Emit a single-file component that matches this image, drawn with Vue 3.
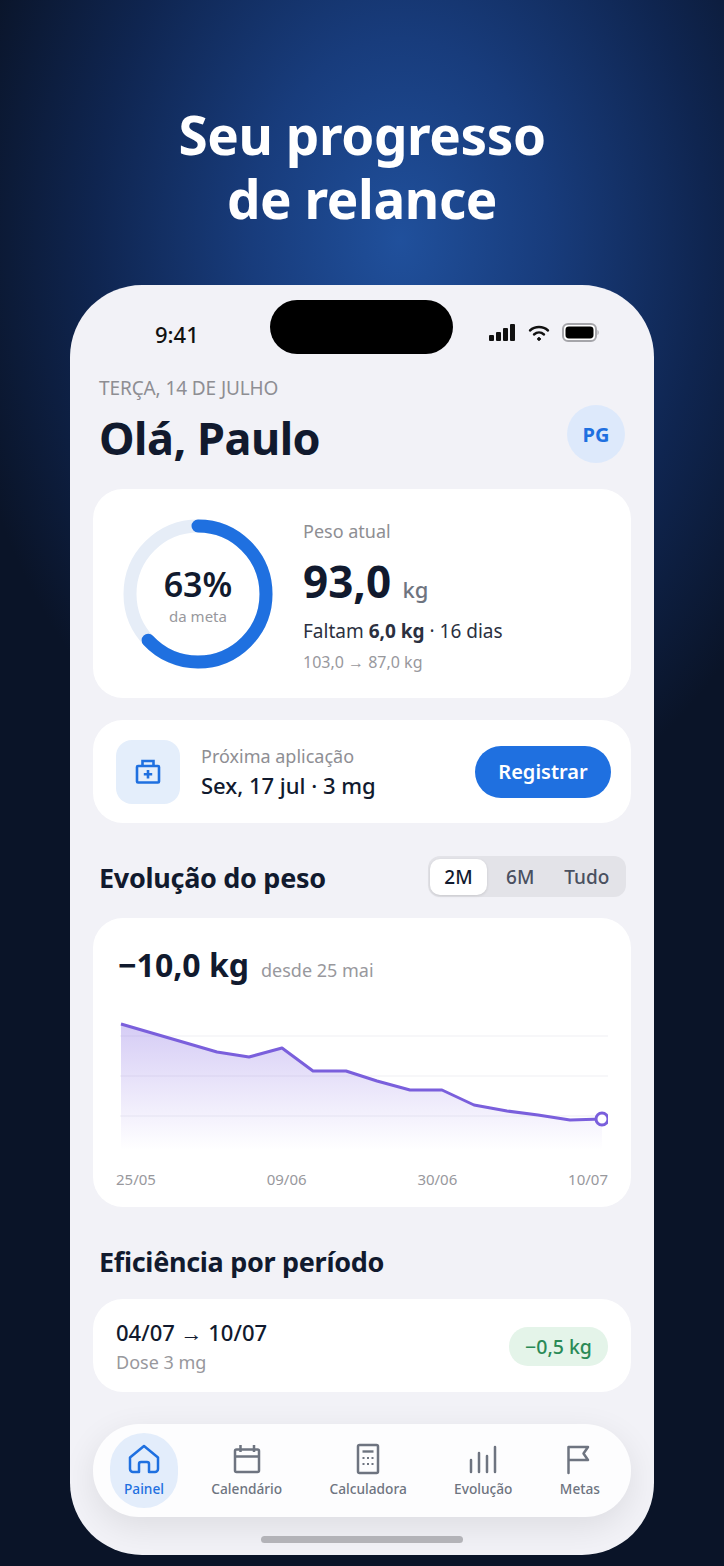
<template>
  <div class="page">
    <h1 class="headline">Seu progresso<br />de relance</h1>

    <div class="phone">
      <div class="status-bar">
        <span class="time">9:41</span>
        <div class="island"></div>
        <div class="status-icons">
          <svg width="27" height="18" viewBox="0 0 27 18" fill="#111">
            <rect x="0" y="11" width="5" height="6" rx="1" />
            <rect x="7" y="8" width="5" height="9" rx="1" />
            <rect x="14" y="4" width="5" height="13" rx="1" />
            <rect x="21" y="0" width="5" height="17" rx="1" />
          </svg>
          <svg width="22" height="18" viewBox="0 0 22 18" fill="none" stroke="#111" stroke-width="2.4" stroke-linecap="round">
            <path d="M2 6.500c5-4.600 13-4.600 18 0" />
            <path d="M6 10.500c3-2.600 7-2.600 10 0" />
            <circle cx="11" cy="15" r="1.400" fill="#111" stroke-width="1" />
          </svg>
          <svg width="38" height="19" viewBox="0 0 38 19">
            <rect x="1" y="1" width="33" height="17" rx="5" fill="#fff" stroke="#a5a5aa" stroke-width="2" />
            <rect x="3.500" y="3.500" width="28" height="12" rx="3.400" fill="#000" />
            <path d="M35.500 7c1.600.4 1.600 4.600 0 5z" fill="#a5a5aa" />
          </svg>
        </div>
      </div>

      <div class="content">
        <div class="greeting">
          <div>
            <div class="date">TERÇA, 14 DE JULHO</div>
            <div class="hello">Olá, Paulo</div>
          </div>
          <div class="avatar">PG</div>
        </div>

        <section class="card weight-card">
          <div class="ring">
            <svg width="150" height="150" viewBox="0 0 150 150">
              <circle cx="75" cy="75" r="68" fill="none" stroke="#e6edf7" stroke-width="13" />
              <circle
                cx="75"
                cy="75"
                r="68"
                fill="none"
                stroke="#1f70e0"
                stroke-width="13"
                stroke-linecap="round"
                :stroke-dasharray="ringDash"
                transform="rotate(-90 75 75)"
              />
            </svg>
            <div class="ring-label">
              <div class="ring-value">63%</div>
              <div class="ring-sub">da meta</div>
            </div>
          </div>
          <div class="weight-info">
            <div class="muted-label">Peso atual</div>
            <div class="weight-value">93,0 <span class="unit">kg</span></div>
            <div class="remaining">Faltam <strong>6,0 kg</strong> · 16 dias</div>
            <div class="range">103,0 → 87,0 kg</div>
          </div>
        </section>

        <section class="card next-card">
          <div class="kit-box">
            <svg width="26" height="25" viewBox="0 0 26 25" fill="none" stroke="#1f70e0" stroke-width="2.600">
              <rect x="2" y="7" width="22" height="16.500" rx="1" />
              <path d="M7.500 7V2h11v5" />
              <path d="M13 11v8.500M8.800 15.200h8.400" />
            </svg>
          </div>
          <div class="next-info">
            <div class="muted-label">Próxima aplicação</div>
            <div class="next-date">Sex, 17 jul · 3 mg</div>
          </div>
          <button class="register">Registrar</button>
        </section>

        <div class="section-head">
          <h2 class="section-title">Evolução do peso</h2>
          <div class="segment">
            <span
              v-for="opt in ranges"
              :key="opt"
              class="segment-item"
              :class="{ active: opt === '2M' }"
            >{{ opt }}</span>
          </div>
        </div>

        <section class="card chart-card">
          <div class="chart-head">
            <span class="delta">−10,0 kg</span>
            <span class="since">desde 25 mai</span>
          </div>
          <svg class="chart" width="488" height="140" viewBox="0 0 488 140">
            <defs>
              <linearGradient id="areaFill" x1="0" y1="0" x2="0" y2="1">
                <stop offset="0" stop-color="#7c5fe0" stop-opacity="0.32" />
                <stop offset="1" stop-color="#7c5fe0" stop-opacity="0" />
              </linearGradient>
            </defs>
            <path v-for="y in [26, 66, 106]" :key="y" :d="`M0 ${y}H488`" stroke="#f4f4f7" stroke-width="1.500" />
            <polygon :points="areaPoints" fill="url(#areaFill)" />
            <polyline :points="linePoints" fill="none" stroke="#7a5fdc" stroke-width="3" stroke-linejoin="round" />
            <circle cx="482" cy="109" r="6" fill="#fff" stroke="#7a5fdc" stroke-width="3" />
          </svg>
          <div class="chart-dates">
            <span v-for="d in dates" :key="d">{{ d }}</span>
          </div>
        </section>

        <h2 class="section-title eff-title">Eficiência por período</h2>

        <section class="card period-card">
          <div>
            <div class="period-dates">04/07 → 10/07</div>
            <div class="period-dose">Dose 3 mg</div>
          </div>
          <div class="pill">−0,5 kg</div>
        </section>

        <nav class="tabbar">
          <div
            v-for="tab in tabs"
            :key="tab.label"
            class="tab"
            :class="{ active: tab.label === 'Painel' }"
          >
            <svg width="36" height="32" viewBox="0 0 36 32" fill="none" stroke="currentColor" stroke-width="2.500" stroke-linejoin="round" stroke-linecap="round">
              <g v-if="tab.icon === 'home'">
                <path d="M18 3 4 14.500V26a3 3 0 0 0 3 3h6v-8a2 2 0 0 1 2-2h6a2 2 0 0 1 2 2v8h6a3 3 0 0 0 3-3V14.500z" />
              </g>
              <g v-else-if="tab.icon === 'calendar'" stroke-linejoin="miter" stroke-linecap="butt">
                <rect x="6" y="6.500" width="24" height="22.500" rx="1.500" />
                <path d="M6 13.500h24M11.500 2v7M25 2v7" />
              </g>
              <g v-else-if="tab.icon === 'calc'" stroke-linecap="butt">
                <rect x="8" y="2" width="20" height="28" rx="1.500" />
                <path d="M12.500 8.500h11" stroke-width="2.400" />
                <path d="M12.500 15h2M17 15h2M21.500 15h2M12.500 21h2M17 21h2M21.500 21h2" stroke-width="2" />
              </g>
              <g v-else-if="tab.icon === 'bars'">
                <path d="M6 29V17M14 29V10M22 29V13M30 29V4" />
              </g>
              <g v-else>
                <path d="M6.500 30V4h19.500l-4.500 6.500 4.500 6.500H6.500" />
              </g>
            </svg>
            <span class="tab-label">{{ tab.label }}</span>
          </div>
        </nav>

        <div class="home-indicator"></div>
      </div>
    </div>
  </div>
</template>

<script setup>
const ranges = ["2M", "6M", "Tudo"];
const dates = ["25/05", "09/06", "30/06", "10/07"];

const tabs = [
  { label: "Painel", icon: "home" },
  { label: "Calendário", icon: "calendar" },
  { label: "Calculadora", icon: "calc" },
  { label: "Evolução", icon: "bars" },
  { label: "Metas", icon: "flag" },
];

// progress ring, 63% of the circumference
const circumference = 2 * Math.PI * 68;
const ringDash = `${circumference * 0.63} ${circumference}`;

// weight curve, in chart coordinates
const points = [
  [1, 14], [97, 42], [129, 47], [162, 38], [193, 61], [226, 61], [257, 71],
  [290, 80], [322, 80], [354, 95], [387, 101], [418, 105], [450, 110], [482, 109],
];
const linePoints = points.map((p) => p.join(",")).join(" ");
const areaPoints = `1,140 ${linePoints} 482,140`;
</script>

<style>
html,
body {
  margin: 0;
  background: #0a1428;
}
</style>

<style scoped>
.page {
  width: 724px;
  height: 1566px;
  overflow: hidden;
  box-sizing: border-box;
  padding-top: 103px;
  font-family: "Noto Sans", "Open Sans", sans-serif;
  color: #111a2e;
  background:
    radial-gradient(ellipse 450px 610px at 400px 240px, #20509c 0%, #183c7c 33%, #0f2550 68%, rgba(10, 20, 40, 0) 100%),
    #0a1428;
}

.headline {
  margin: 0 0 54px;
  text-align: center;
  font-size: 53px;
  line-height: 64px;
  font-weight: 700;
  color: #fff;
  letter-spacing: -0.4px;
}

.phone {
  width: 584px;
  height: 1270px;
  margin-left: 70px;
  box-sizing: border-box;
  background: #f2f2f7;
  border-radius: 72px;
  overflow: hidden;
  padding-top: 15px;
}

.status-bar {
  display: flex;
  align-items: center;
  padding: 0 54px 0 85px;
  height: 54px;
}

.time {
  width: 115px;
  font-size: 22px;
  font-weight: 500;
  color: #111;
  margin-top: 14px;
}

.island {
  width: 184px;
  height: 54px;
  background: #000;
  border-radius: 27px;
}

.status-icons {
  display: flex;
  align-items: center;
  gap: 12px;
  margin-left: 36px;
  margin-top: 11px;
}

.content {
  padding: 0 23px;
}

.greeting {
  display: flex;
  justify-content: space-between;
  align-items: flex-start;
  padding: 21px 6px 0;
  height: 135px;
  box-sizing: border-box;
}

.date {
  font-size: 19px;
  line-height: 26px;
  color: #8e8e93;
  letter-spacing: -0.1px;
}

.hello {
  font-size: 45px;
  line-height: 62px;
  margin-top: 6px;
  font-weight: 700;
  letter-spacing: -0.5px;
}

.avatar {
  width: 58px;
  height: 58px;
  border-radius: 50%;
  background: #dde9fb;
  color: #1f70e0;
  font-size: 20px;
  font-weight: 700;
  display: flex;
  align-items: center;
  justify-content: center;
  margin-top: 30px;
}

.card {
  background: #fff;
  border-radius: 30px;
}

.weight-card {
  height: 209px;
  display: flex;
  align-items: center;
  padding: 0 30px;
  gap: 30px;
}

.ring {
  position: relative;
  width: 150px;
  height: 150px;
  flex: none;
}

.ring-label {
  position: absolute;
  inset: 0;
  padding-top: 3px;
  box-sizing: border-box;
  display: flex;
  flex-direction: column;
  align-items: center;
  justify-content: center;
}

.ring-value {
  font-size: 34px;
  line-height: 44px;
  font-weight: 600;
}

.ring-sub {
  font-size: 15px;
  line-height: 24px;
  margin-top: -2px;
  color: #98989d;
}

.weight-info {
  align-self: flex-start;
  margin-top: 29px;
}

.muted-label {
  font-size: 18px;
  line-height: 26px;
  color: #8e8e93;
}

.weight-value {
  font-size: 44px;
  line-height: 62px;
  font-weight: 700;
  margin-top: 6px;
}

.unit {
  font-size: 22px;
  font-weight: 500;
  color: #6e7480;
}

.remaining {
  font-size: 19px;
  line-height: 28px;
  color: #2b3040;
  margin-top: -3px;
}

.range {
  font-size: 16px;
  line-height: 28px;
  color: #98989d;
  margin-top: 3px;
}

.next-card {
  height: 103px;
  margin-top: 22px;
  display: flex;
  align-items: center;
  padding: 0 20px 0 23px;
}

.kit-box {
  width: 64px;
  height: 64px;
  border-radius: 16px;
  background: #e4eefb;
  display: flex;
  align-items: center;
  justify-content: center;
  margin-right: 21px;
}

.next-info {
  flex: 1;
}

.next-date {
  font-size: 22px;
  line-height: 32px;
  font-weight: 500;
  color: #111a2e;
}

.register {
  width: 136px;
  height: 52px;
  border: none;
  border-radius: 26px;
  background: #1f70e0;
  color: #fff;
  font: 600 20px "Noto Sans", sans-serif;
  padding: 0;
}

.section-head {
  display: flex;
  justify-content: space-between;
  align-items: center;
  height: 41px;
  margin-top: 33px;
  margin-right: 5px;
  padding-left: 6px;
}

.section-head .section-title {
  margin-top: 3px;
}

.section-title {
  margin: 0;
  font-size: 27px;
  line-height: 40px;
  font-weight: 700;
  letter-spacing: -0.3px;
  color: #111a2e;
}

.segment {
  display: flex;
  align-items: center;
  width: 198px;
  height: 41px;
  box-sizing: border-box;
  padding: 0 6px 0 2px;
  background: #e3e3e8;
  border-radius: 12px;
}

.segment-item {
  flex: 1;
  text-align: center;
  font-size: 19px;
  font-weight: 500;
  line-height: 36px;
  color: #4a5060;
}

.segment-item.active {
  flex: none;
  width: 57px;
  background: #fff;
  border-radius: 10px;
  color: #111a2e;
  box-shadow: 0 1px 3px rgba(0, 0, 0, 0.12);
}

.chart-card {
  height: 289px;
  margin-top: 21px;
  padding: 25px 23px 0 27px;
  box-sizing: border-box;
}

.chart-head {
  display: flex;
  align-items: baseline;
  gap: 12px;
  height: 44px;
  margin-left: -2px;
}

.delta {
  font-size: 32px;
  line-height: 44px;
  font-weight: 700;
}

.since {
  font-size: 18px;
  color: #98989d;
}

.chart {
  display: block;
  margin-top: 23px;
}

.chart-dates {
  display: flex;
  justify-content: space-between;
  margin-left: -4px;
  margin-top: 18px;
  font-size: 15px;
  line-height: 22px;
  color: #98989d;
}

.eff-title {
  margin: 35px 0 0 6px;
}

.period-card {
  height: 93px;
  margin-top: 17px;
  display: flex;
  align-items: center;
  justify-content: space-between;
  padding: 0 23px;
}

.period-dates {
  font-size: 22px;
  line-height: 32px;
  font-weight: 500;
}

.period-dose {
  font-size: 18px;
  line-height: 28px;
  color: #98989d;
}

.pill {
  width: 99px;
  height: 39px;
  margin-top: 1px;
  border-radius: 19px;
  background: #e4f4e9;
  color: #2a8a56;
  font-size: 19.500px;
  font-weight: 500;
  display: flex;
  align-items: center;
  justify-content: center;
}

.tabbar {
  height: 93px;
  margin-top: 32px;
  padding: 0 17px;
  box-sizing: border-box;
  background: #fdfdfe;
  border-radius: 46px;
  display: flex;
  align-items: center;
  justify-content: space-between;
  box-shadow: 0 10px 34px rgba(0, 0, 0, 0.09);
}

.tab {
  height: 75px;
  display: flex;
  flex-direction: column;
  align-items: center;
  justify-content: center;
  color: #6e7480;
  padding: 0 14px;
  border-radius: 34px;
}

.tab.active {
  background: #e3edfb;
  color: #1f70e0;
}

.tab-label {
  font-size: 13.700px;
  line-height: 20px;
  font-weight: 500;
  margin-top: 4px;
}

.home-indicator {
  width: 202px;
  height: 7px;
  border-radius: 4px;
  background: #b3b3b8;
  margin: 19px auto 0;
}
</style>
